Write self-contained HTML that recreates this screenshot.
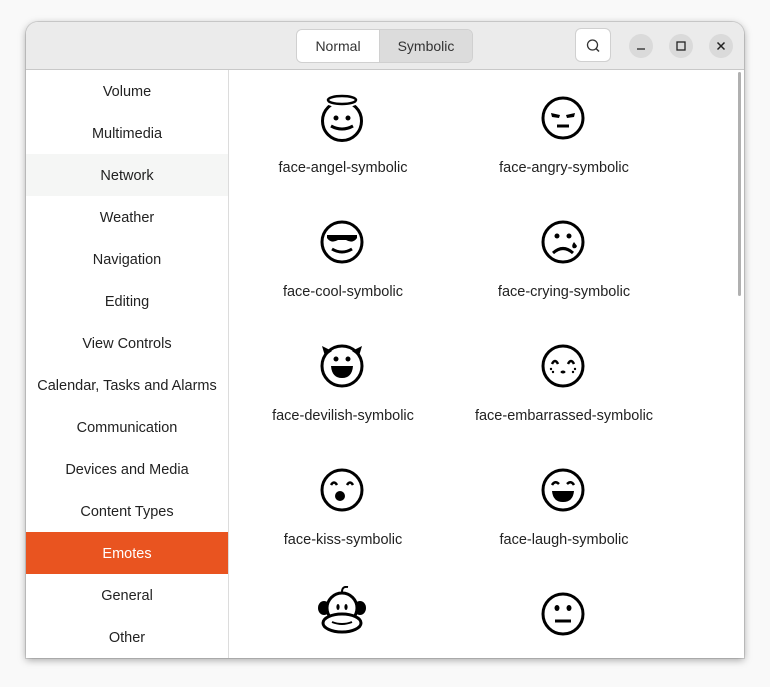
<!DOCTYPE html>
<html><head><style>
*{margin:0;padding:0;box-sizing:border-box}
body{width:770px;height:687px;background:#f9f9f9;font-family:"Liberation Sans",sans-serif;position:relative;overflow:hidden}
.win{position:absolute;left:26px;top:22px;width:718px;height:636px;background:#fff;border-radius:12px 12px 0 0;box-shadow:0 2px 8px rgba(0,0,0,.35),0 0 0 1px rgba(0,0,0,.12);overflow:hidden}
.hdr{position:absolute;left:0;top:0;width:718px;height:48px;background:#ebebeb;border-bottom:1px solid #c8c8c8}
.seg{position:absolute;left:270px;top:7px;width:177px;height:34px;border:1px solid #d0d0d0;border-radius:6px;overflow:hidden;font-size:14px;color:#333}
.seg div{position:absolute;top:0;height:32px;line-height:32px;text-align:center}
.srch{position:absolute;left:549px;top:6px;width:36px;height:34px;background:#fff;border:1px solid #d0d0d0;border-radius:6px}
.cb{position:absolute;top:12px;width:24px;height:24px;border-radius:50%;background:#dadada}
.side{position:absolute;left:0;top:48px;width:203px;height:588px;border-right:1px solid #dcdcdc}
.side div{height:42px;line-height:44px;text-align:center;font-size:14.5px;color:#222}
.cell{position:absolute;width:220px;text-align:center;font-size:14.5px;color:#222}
svg.ic{position:absolute}
</style></head><body>
<div class="win">
<div class="hdr">
 <div class="seg"><div style="left:0;width:82px;background:#fff">Normal</div><div style="left:82px;width:93px;background:#dcdcdc;border-left:1px solid #d0d0d0">Symbolic</div></div>
 <div class="srch"><svg width="36" height="34"><circle cx="16.5" cy="16" r="5" fill="none" stroke="#333" stroke-width="1.3"/><line x1="20" y1="19.5" x2="23" y2="22.5" stroke="#333" stroke-width="1.5"/></svg></div>
 <div class="cb" style="left:603px"><svg width="24" height="24"><line x1="8" y1="15" x2="16" y2="15" stroke="#222" stroke-width="1.3"/></svg></div>
 <div class="cb" style="left:643px"><svg width="24" height="24"><rect x="8" y="8" width="8" height="8" fill="none" stroke="#222" stroke-width="1.3"/></svg></div>
 <div class="cb" style="left:683px"><svg width="24" height="24"><path d="M8.5 8.5L15.5 15.5M15.5 8.5L8.5 15.5" stroke="#222" stroke-width="1.5"/></svg></div>
</div>
<div class="side">
<div>Volume</div><div>Multimedia</div><div style="background:#f5f6f5">Network</div><div>Weather</div><div>Navigation</div><div>Editing</div><div>View Controls</div><div>Calendar, Tasks and Alarms</div><div>Communication</div><div>Devices and Media</div><div>Content Types</div><div style="background:#e95420;color:#fff">Emotes</div><div>General</div><div>Other</div>
</div>
<div style="position:absolute;left:712px;top:50px;width:3px;height:224px;background:#b0b0b0;border-radius:2px"></div>

<div class="cell" style="left:207px;top:138px">face-angel-symbolic</div>
<div class="cell" style="left:428px;top:138px">face-angry-symbolic</div>
<div class="cell" style="left:207px;top:262px">face-cool-symbolic</div>
<div class="cell" style="left:428px;top:262px">face-crying-symbolic</div>
<div class="cell" style="left:207px;top:386px">face-devilish-symbolic</div>
<div class="cell" style="left:428px;top:386px">face-embarrassed-symbolic</div>
<div class="cell" style="left:207px;top:510px">face-kiss-symbolic</div>
<div class="cell" style="left:428px;top:510px">face-laugh-symbolic</div>

<!-- angel -->
<svg class="ic" style="left:294px;top:72px" width="44" height="48" viewBox="0 0 44 48"><circle cx="22" cy="27" r="19.5" fill="none" stroke="#000" stroke-width="3"/><ellipse cx="22" cy="6" rx="14" ry="4.5" fill="#fff" stroke="#fff" stroke-width="6"/><ellipse cx="22" cy="6" rx="14" ry="4" fill="none" stroke="#000" stroke-width="2.5"/><circle cx="16" cy="24" r="2.5"/><circle cx="28" cy="24" r="2.5"/><path d="M11 32Q22 38 33 32" fill="none" stroke="#000" stroke-width="3"/></svg>
<!-- angry -->
<svg class="ic" style="left:515px;top:74px" width="44" height="44" viewBox="0 0 44 44"><circle cx="22" cy="22" r="20" fill="none" stroke="#000" stroke-width="3"/><path d="M10 17L19 19L18 22L11 21Z"/><path d="M34 17L25 19L26 22L33 21Z"/><line x1="16" y1="30" x2="28" y2="30" stroke="#000" stroke-width="3"/></svg>
<!-- cool -->
<svg class="ic" style="left:294px;top:198px" width="44" height="44" viewBox="0 0 44 44"><circle cx="22" cy="22" r="20" fill="none" stroke="#000" stroke-width="3"/><path d="M7 15H37V18Q33 24 26 20H18Q11 24 7 18Z"/><path d="M12 29Q22 35 32 29" fill="none" stroke="#000" stroke-width="3"/></svg>
<!-- crying -->
<svg class="ic" style="left:515px;top:198px" width="44" height="44" viewBox="0 0 44 44"><circle cx="22" cy="22" r="20" fill="none" stroke="#000" stroke-width="3"/><circle cx="16" cy="16" r="2.5"/><circle cx="28" cy="16" r="2.5"/><path d="M12 33Q22 24 32 33" fill="none" stroke="#000" stroke-width="3"/><path d="M33 22Q30 26 32 28Q35 29 36 26Z"/></svg>
<!-- devilish -->
<svg class="ic" style="left:293px;top:320px" width="46" height="46" viewBox="0 0 46 46"><path d="M3 4L13 9L6 14Z"/><path d="M43 4L33 9L40 14Z"/><circle cx="23" cy="24" r="20" fill="none" stroke="#000" stroke-width="3"/><circle cx="17" cy="17" r="2.5"/><circle cx="29" cy="17" r="2.5"/><path d="M12 24H34Q33 36 23 36Q13 36 12 24Z"/></svg>
<!-- embarrassed -->
<svg class="ic" style="left:515px;top:322px" width="44" height="44" viewBox="0 0 44 44"><circle cx="22" cy="22" r="20" fill="none" stroke="#000" stroke-width="3"/><path d="M11 20Q14 14 17 20M27 20Q30 14 33 20" fill="none" stroke="#000" stroke-width="2.5"/><circle cx="10" cy="25" r="1.2"/><circle cx="12" cy="28" r="1.2"/><circle cx="34" cy="25" r="1.2"/><circle cx="32" cy="28" r="1.2"/><ellipse cx="22" cy="28" rx="2.5" ry="1.5"/></svg>
<!-- kiss -->
<svg class="ic" style="left:294px;top:446px" width="44" height="44" viewBox="0 0 44 44"><circle cx="22" cy="22" r="20" fill="none" stroke="#000" stroke-width="3"/><path d="M11 17Q14 12 17 17M27 17Q30 12 33 17" fill="none" stroke="#000" stroke-width="2.5"/><circle cx="20" cy="28" r="5"/></svg>
<!-- laugh -->
<svg class="ic" style="left:515px;top:446px" width="44" height="44" viewBox="0 0 44 44"><circle cx="22" cy="22" r="20" fill="none" stroke="#000" stroke-width="3"/><path d="M11 17Q14 12 18 16M26 16Q30 12 33 17" fill="none" stroke="#000" stroke-width="2.5"/><path d="M11 23H33Q32 34 22 34Q12 34 11 23Z"/></svg>
<!-- monkey -->
<svg class="ic" style="left:292px;top:564px" width="48" height="50" viewBox="0 0 48 50"><path d="M24 6Q24 0 30 1" fill="none" stroke="#000" stroke-width="2"/><ellipse cx="6" cy="22" rx="6" ry="7"/><ellipse cx="42" cy="22" rx="6" ry="7"/><circle cx="24" cy="22" r="15" fill="#fff" stroke="#000" stroke-width="3"/><ellipse cx="20" cy="21" rx="1.6" ry="3"/><ellipse cx="28" cy="21" rx="1.6" ry="3"/><ellipse cx="24" cy="37" rx="19" ry="9" fill="#fff" stroke="#000" stroke-width="3"/><path d="M14 36Q24 40 34 36" fill="none" stroke="#000" stroke-width="2"/></svg>
<!-- plain -->
<svg class="ic" style="left:515px;top:570px" width="44" height="44" viewBox="0 0 44 44"><circle cx="22" cy="22" r="20" fill="none" stroke="#000" stroke-width="3"/><ellipse cx="16" cy="16" rx="2.5" ry="3"/><ellipse cx="28" cy="16" rx="2.5" ry="3"/><line x1="14" y1="29" x2="30" y2="29" stroke="#000" stroke-width="3"/></svg>
</div>
</body></html>
